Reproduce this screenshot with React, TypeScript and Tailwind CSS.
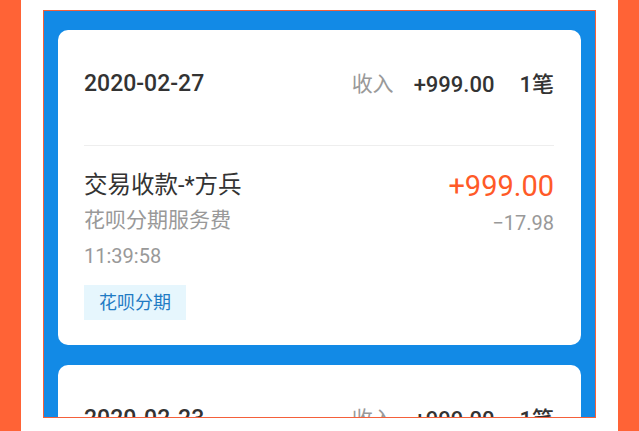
import React from 'react';

type Bill = {
  date: string;
  income: string;
  count: string;
  title: string;
  amount: string;
  sub: string;
  fee: string;
  time: string;
  tag: string;
};

const bills: Bill[] = [
  {
    date: '2020-02-27',
    income: '+999.00',
    count: '1笔',
    title: '交易收款-*方兵',
    amount: '+999.00',
    sub: '花呗分期服务费',
    fee: '−17.98',
    time: '11:39:58',
    tag: '花呗分期',
  },
  {
    date: '2020-02-23',
    income: '+999.00',
    count: '1笔',
    title: '交易收款-*方兵',
    amount: '+999.00',
    sub: '花呗分期服务费',
    fee: '−17.98',
    time: '11:39:58',
    tag: '花呗分期',
  },
];

function BillCard({ bill }: { bill: Bill }) {
  return (
    <div className="shrink-0 rounded-[10px] bg-white pl-[26px] pr-[27px]">
      <div className="flex h-[115px] items-center justify-between pb-[6px]">
        <span className="text-[23px] font-medium text-[#333]">{bill.date}</span>
        <div className="flex items-center">
          <span className="text-[21px] text-[#999]">收入</span>
          <span className="ml-[20px] text-[22px] font-medium text-[#333]">{bill.income}</span>
          <span className="ml-[25px] text-[22px] font-medium text-[#333]">{bill.count}</span>
        </div>
      </div>
      <div className="h-px bg-[#eeeeee]" />
      <div className="flex justify-between pt-[24px] pb-[25px]">
        <div className="flex flex-col items-start">
          <span className="text-[23.5px] leading-[30px] text-[#333]">{bill.title}</span>
          <span className="mt-[5px] text-[21px] leading-[30px] text-[#999]">{bill.sub}</span>
          <span className="mt-[6px] text-[20px] leading-[30px] text-[#999]">{bill.time}</span>
          <span className="mt-[14px] bg-[#e6f6fd] px-[15px] text-[18px] leading-[35px] text-[#1f7bc4]">
            {bill.tag}
          </span>
        </div>
        <div className="-mt-[2px] flex flex-col items-end">
          <span className="text-[29px] leading-[36px] text-[#ff5a27]">{bill.amount}</span>
          <span className="mt-[4px] text-[20px] leading-[30px] text-[#999]">{bill.fee}</span>
        </div>
      </div>
    </div>
  );
}

export default function App() {
  return (
    <div className="flex h-[431px] w-[639px] overflow-hidden bg-white font-['Roboto','Noto_Sans_CJK_SC',sans-serif]">
      <div className="w-[21px] shrink-0 bg-[#ff6336]" />
      <div className="ml-[22px] mt-[10px] flex h-[408px] w-[553px] shrink-0 flex-col gap-[20px] overflow-hidden border border-[#f4603a] bg-[#128ae6] px-[14px] pt-[19px]">
        {bills.map((b) => (
          <BillCard key={b.date} bill={b} />
        ))}
      </div>
      <div className="ml-auto w-[21px] shrink-0 bg-[#ff6336]" />
    </div>
  );
}
